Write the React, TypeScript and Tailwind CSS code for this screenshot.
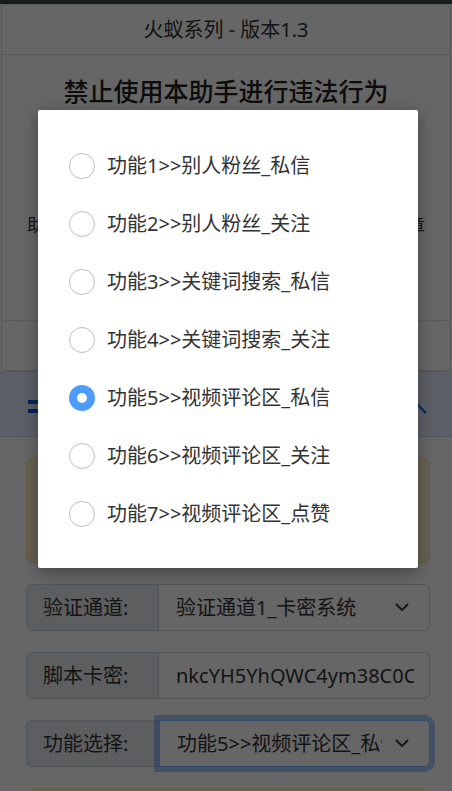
import React from "react";

const options = [
  "功能1>>别人粉丝_私信",
  "功能2>>别人粉丝_关注",
  "功能3>>关键词搜索_私信",
  "功能4>>关键词搜索_关注",
  "功能5>>视频评论区_私信",
  "功能6>>视频评论区_关注",
  "功能7>>视频评论区_点赞",
];

function ChevronDown() {
  return (
    <svg width="14" height="9" viewBox="0 0 14 9" className="shrink-0">
      <path d="M1.5 1.5 L7 7 L12.5 1.5" fill="none" stroke="#343a40" strokeWidth="2" strokeLinecap="round" strokeLinejoin="round" />
    </svg>
  );
}

export default function App() {
  return (
    <div className="relative w-full h-[791px] overflow-hidden bg-white text-[#333] font-['Noto_Sans','Noto_Sans_CJK_SC',sans-serif]">
      <div className="h-[4px] bg-[#3a4848]" />
      {/* Card */}
      <div className="mx-[1px] border border-[#dcdcdc] rounded-b-[6px] flex flex-col">
        <div className="h-[50px] flex items-center justify-center border-b border-[#dcdcdc] text-[20px] leading-none">
          火蚁系列 - 版本1.3
        </div>
        <div className="h-[265px] flex flex-col">
          <div className="mt-[19px] h-[36px] flex items-center justify-center text-[25px] font-medium text-[#222]">
            禁止使用本助手进行违法行为
          </div>
          <div className="mt-[100px] h-[30px] px-[25px] flex items-center justify-between text-[18px]">
            <span>助</span>
            <span>章</span>
          </div>
        </div>
        <div className="h-[50px] border-t border-[#dcdcdc]" />
      </div>
      {/* Accordion header */}
      <div className="h-[66px] bg-[#e7f1ff] border-y border-[#cfd8e3] flex items-center justify-between pl-[28px] pr-[20px]">
        <svg width="16" height="16" viewBox="0 0 16 16" className="mt-[5px]">
          <rect x="0" y="1" width="16" height="4" fill="#0c63e4" />
          <rect x="0" y="10" width="16" height="4" fill="#0c63e4" />
        </svg>
        <svg width="24" height="14" viewBox="0 0 24 14" className="mt-[6px] mr-[4px]">
          <path d="M2 13 L12 3 L22 13" fill="none" stroke="#0c63e4" strokeWidth="2" />
        </svg>
      </div>
      {/* Accordion body */}
      <div className="pl-[26px] pr-[22px] pt-[21px] flex flex-col gap-[21px]">
        <div className="h-[105px] rounded-[8px] bg-[#fff3cd] border border-[#ffe69c]" />
        <div className="flex h-[47px] text-[20px]">
          <div className="w-[133px] shrink-0 flex items-center pl-[16px] bg-[#e9ecef] border border-[#ced4da] rounded-l-[6px]">验证通道:</div>
          <div className="flex-1 min-w-0 flex items-center pl-[17px] pr-[20px] border border-l-0 border-[#ced4da] rounded-r-[6px]">
            <span className="flex-1 min-w-0 overflow-hidden whitespace-nowrap">验证通道1_卡密系统</span>
            <ChevronDown />
          </div>
        </div>
        <div className="flex h-[47px] text-[20px]">
          <div className="w-[133px] shrink-0 flex items-center pl-[16px] bg-[#e9ecef] border border-[#ced4da] rounded-l-[6px]">脚本卡密:</div>
          <div className="flex-1 min-w-0 flex items-center pl-[17px] pr-[15px] border border-l-0 border-[#ced4da] rounded-r-[6px]">
            <span className="flex-1 min-w-0 overflow-hidden whitespace-nowrap">nkcYH5YhQWC4ym38C0C9xTq</span>
          </div>
        </div>
        <div className="flex h-[47px] text-[20px]">
          <div className="w-[133px] shrink-0 flex items-center pl-[16px] bg-[#e9ecef] border border-r-0 border-[#ced4da] rounded-l-[6px]">功能选择:</div>
          <div className="flex-1 min-w-0 flex items-center pl-[17px] pr-[20px] border border-[#86b7fe] rounded-r-[6px] shadow-[0_0_0_5px_rgba(13,110,253,0.35)]">
            <span className="flex-1 min-w-0 overflow-hidden whitespace-nowrap mr-[13px]">功能5&gt;&gt;视频评论区_私信</span>
            <ChevronDown />
          </div>
        </div>
        <div className="h-[60px] rounded-[8px] bg-[#fff3cd] border border-[#ffe69c]" />
      </div>

      {/* Overlay */}
      <div className="absolute inset-0 bg-black/60" />
      {/* Dialog */}
      <div className="absolute left-[38px] top-[110px] w-[380px] h-[458px] bg-white rounded-[2px] shadow-[0_4px_16px_rgba(0,0,0,0.35)] pt-[27px] pb-[25px] pl-[31px] flex flex-col">
        {options.map((o, i) => (
          <div key={o} className="h-[58px] flex items-center gap-[12px]">
            {i === 4 ? (
              <div className="w-[26px] h-[26px] rounded-full border-[8.5px] border-[#4d9cfd] bg-white shrink-0" />
            ) : (
              <div className="w-[26px] h-[26px] rounded-full border-[1.5px] border-[#bdbdbd] bg-white shrink-0" />
            )}
            <span className="text-[20px] text-[#333] leading-none">{o}</span>
          </div>
        ))}
      </div>
    </div>
  );
}
